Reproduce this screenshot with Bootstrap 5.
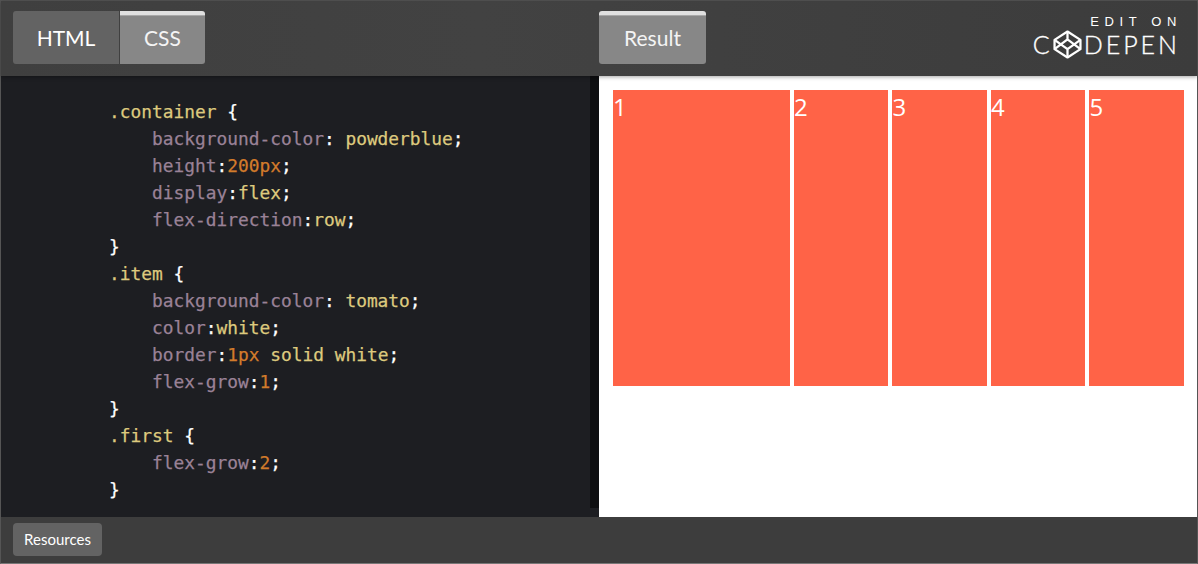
<!DOCTYPE html>
<html lang="en">
<head>
<meta charset="utf-8">
<title>CodePen embed</title>
<link href="https://cdn.jsdelivr.net/npm/bootstrap@5.3.0/dist/css/bootstrap.min.css" rel="stylesheet">
<style>
html,body{height:100%;margin:0;overflow:hidden;background:#3d3d3d}
.pen-frame{width:1198px;height:564px;border:1px solid #555;border-bottom-color:#777;display:flex;flex-direction:column;font-family:Lato,"Liberation Sans",sans-serif;background:#3d3d3d}
.pen-top{height:75px;flex:none;background:linear-gradient(90deg,#3f3f3f,#424242 40%,#3c3c3c);padding:10px 12px 0;position:relative;z-index:2;box-shadow:0 1px 4px rgba(0,0,0,.35)}
.pen-tab{height:53px;border:0;color:#fff;font-size:21px;line-height:53px;padding:0;text-align:center;background:#636363;text-decoration:none;display:block}
.tab-html{width:106px;border-radius:3px 0 0 3px;margin-right:1px}
.tab-css{width:85px;border-radius:0 3px 3px 0}
.tab-result{width:107px;border-radius:3px}
.tab-on{background:#878787;border-top:4px solid #e0e0e0;line-height:45px;color:#f4f4f4;box-shadow:inset 0 1px 0 #a8a8a8}
.tab-left{width:586px}
.brand-mark{margin-left:auto;color:#fff;text-align:right;margin-right:6px;margin-top:4px}
.brand-top{font-size:13px;letter-spacing:5.6px;line-height:13px;margin-right:-3px;font-family:"Liberation Sans",sans-serif}
.brand-bottom{display:flex;align-items:center;justify-content:flex-end;font-size:25px;line-height:27px;letter-spacing:3px;margin-top:3px;margin-right:-1px;font-family:Lato,sans-serif;font-weight:300;-webkit-text-stroke:.35px #fff}
.brand-bottom svg{width:29px;height:29px;flex:none;margin:-1px 2px -1px 0}
.pen-main{flex:1;min-height:0}
.pen-code{width:598px;background:#1d1e22;position:relative;padding:22px 0 0 108px;font-family:"DejaVu Sans Mono","Liberation Mono",monospace;font-size:17.85px;line-height:27px;color:#fff;-webkit-text-stroke:.25px currentColor}
.code-line{height:27px;white-space:nowrap}
.code-in{padding-left:43px}
.code-rail{position:absolute;right:0;top:0;bottom:9px;width:9px;background:#0e0f11}
.code-sel{color:#ddca7e}.code-prop{color:#9a8297}.code-val{color:#ddca7e}.code-num{color:#d27b2b}
.pen-result{flex:1;background:#fff;padding:14px 13.1px 0 13.9px}
.flex-demo{display:flex;gap:4px;height:296px}
.flex-box{flex:1 1 12px;min-width:0;background:tomato;color:#fff;font-family:"Open Sans",sans-serif;font-size:24px;line-height:33px;height:296px;overflow:hidden}
.flex-wide{flex-grow:2}
.pen-foot{height:46px;flex:none;background:#3d3d3d;padding:6px 12px 0}
.res-btn{background:#636363;color:#fff;border:0;border-radius:4px;font-size:15px;height:33px;width:89px;line-height:33px;padding:0;display:block;text-align:center;text-decoration:none;font-family:Lato,sans-serif}
</style>
</head>
<body>
<div class="pen-frame">
  <div class="pen-top d-flex">
    <div class="tab-left d-flex">
      <a class="pen-tab tab-html" href="#">HTML</a>
      <a class="pen-tab tab-css tab-on" href="#">CSS</a>
    </div>
    <a class="pen-tab tab-result tab-on" href="#">Result</a>
    <div class="brand-mark">
      <div class="brand-top">EDIT ON</div>
      <div class="brand-bottom"><span>C</span><svg viewBox="0 0 28 28" fill="none" stroke="#fff" stroke-width="2.2" stroke-linejoin="round"><path d="M14 1.5 26.5 9.5v9L14 26.5 1.5 18.5v-9z"/><path d="M14 1.5v7.5M14 19v7.5M1.5 9.5 14 18.5 26.5 9.5M1.5 18.5 14 9 26.5 18.5"/></svg><span>DEPEN</span></div>
    </div>
  </div>
  <div class="pen-main d-flex">
    <div class="pen-code">
      <div class="code-line"><span class="code-sel">.container</span> {</div>
      <div class="code-line code-in"><span class="code-prop">background-color</span>: <span class="code-val">powderblue</span>;</div>
      <div class="code-line code-in"><span class="code-prop">height</span>:<span class="code-num">200px</span>;</div>
      <div class="code-line code-in"><span class="code-prop">display</span>:<span class="code-val">flex</span>;</div>
      <div class="code-line code-in"><span class="code-prop">flex-direction</span>:<span class="code-val">row</span>;</div>
      <div class="code-line">}</div>
      <div class="code-line"><span class="code-sel">.item</span> {</div>
      <div class="code-line code-in"><span class="code-prop">background-color</span>: <span class="code-val">tomato</span>;</div>
      <div class="code-line code-in"><span class="code-prop">color</span>:<span class="code-val">white</span>;</div>
      <div class="code-line code-in"><span class="code-prop">border</span>:<span class="code-num">1px</span> <span class="code-val">solid</span> <span class="code-val">white</span>;</div>
      <div class="code-line code-in"><span class="code-prop">flex-grow</span>:<span class="code-num">1</span>;</div>
      <div class="code-line">}</div>
      <div class="code-line"><span class="code-sel">.first</span> {</div>
      <div class="code-line code-in"><span class="code-prop">flex-grow</span>:<span class="code-num">2</span>;</div>
      <div class="code-line">}</div>
      <span class="code-rail"></span>
    </div>
    <div class="pen-result">
      <div class="flex-demo">
        <div class="flex-box flex-wide">1</div>
        <div class="flex-box">2</div>
        <div class="flex-box">3</div>
        <div class="flex-box">4</div>
        <div class="flex-box">5</div>
      </div>
    </div>
  </div>
  <div class="pen-foot"><a class="res-btn" href="#">Resources</a></div>
</div>
<script src="https://cdn.jsdelivr.net/npm/bootstrap@5.3.0/dist/js/bootstrap.bundle.min.js"></script>
</body>
</html>
